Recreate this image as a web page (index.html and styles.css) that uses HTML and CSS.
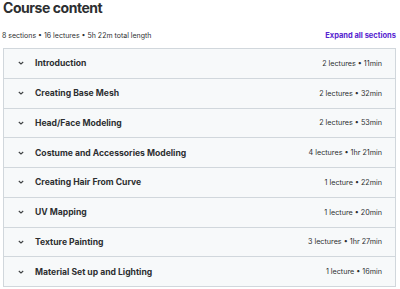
FILE: index.html
```html
<!DOCTYPE html>
<html lang="en">
<head>
    <meta charset="UTF-8">
    <title>Course content</title>
    <link rel="stylesheet" href="styles.css">
</head>
<body>
    <div class="curriculum">
        <h2 class="title">Course content</h2>
        <div class="summary">
            <span>8 sections • 16 lectures • 5h 22m total length</span>
            <a href="#" class="expand">Expand all sections</a>
        </div>
        <ul class="sections">
            <li class="section"><span class="chev"><svg viewBox="0 0 10 10"><path d="M2.8 4 5 6 7.2 4"/></svg></span><span class="name">Introduction</span><span class="meta">2 lectures • 11min</span></li>
            <li class="section"><span class="chev"><svg viewBox="0 0 10 10"><path d="M2.8 4 5 6 7.2 4"/></svg></span><span class="name">Creating Base Mesh</span><span class="meta">2 lectures • 32min</span></li>
            <li class="section"><span class="chev"><svg viewBox="0 0 10 10"><path d="M2.8 4 5 6 7.2 4"/></svg></span><span class="name">Head/Face Modeling</span><span class="meta">2 lectures • 53min</span></li>
            <li class="section"><span class="chev"><svg viewBox="0 0 10 10"><path d="M2.8 4 5 6 7.2 4"/></svg></span><span class="name">Costume and Accessories Modeling</span><span class="meta">4 lectures • 1hr 21min</span></li>
            <li class="section"><span class="chev"><svg viewBox="0 0 10 10"><path d="M2.8 4 5 6 7.2 4"/></svg></span><span class="name">Creating Hair From Curve</span><span class="meta">1 lecture • 22min</span></li>
            <li class="section"><span class="chev"><svg viewBox="0 0 10 10"><path d="M2.8 4 5 6 7.2 4"/></svg></span><span class="name">UV Mapping</span><span class="meta">1 lecture • 20min</span></li>
            <li class="section"><span class="chev"><svg viewBox="0 0 10 10"><path d="M2.8 4 5 6 7.2 4"/></svg></span><span class="name">Texture Painting</span><span class="meta">3 lectures • 1hr 27min</span></li>
            <li class="section"><span class="chev"><svg viewBox="0 0 10 10"><path d="M2.8 4 5 6 7.2 4"/></svg></span><span class="name">Material Set up and Lighting</span><span class="meta">1 lecture • 16min</span></li>
        </ul>
    </div>
</body>
</html>
```

FILE: styles.css
```css
body {
    margin: 0;
    background-color: #ffffff;
    font-family: Inter, "Noto Sans", Arial, sans-serif;
    color: #2d2f31;
}
.curriculum {
    padding: 0 4px 0 2px;
}
.title {
    font-size: 14px;
    font-weight: 700;
    margin: 0;
    line-height: 16px;
    letter-spacing: -0.45px;
    padding-left: 1px;
}
.summary {
    display: flex;
    justify-content: space-between;
    align-items: center;
    margin-top: 14px;
    font-size: 7px;
    line-height: 12px;
}
.expand {
    color: #5624d0;
    font-weight: 700;
    font-size: 7.5px;
    text-decoration: none;
}
.sections {
    list-style: none;
    margin: 6px 0 0 1px;
    padding: 0;
    border: 1px solid #d1d7dc;
}
.section {
    display: flex;
    align-items: center;
    height: 28.75px;
    padding: 0 13px 0 12px;
    background-color: #f7f9fa;
    border-bottom: 1px solid #d1d7dc;
    font-size: 8.6px;
}
.section:last-child { border-bottom: none; }
.chev {
    width: 10px;
    height: 10px;
    margin-right: 9px;
    display: flex;
}
.chev svg {
    width: 10px;
    height: 10px;
    fill: none;
    stroke: #3e4143;
    stroke-width: 1.1;
}
.name {
    flex: 1;
    font-weight: 700;
}
.meta {
    font-size: 7.2px;
}
```
